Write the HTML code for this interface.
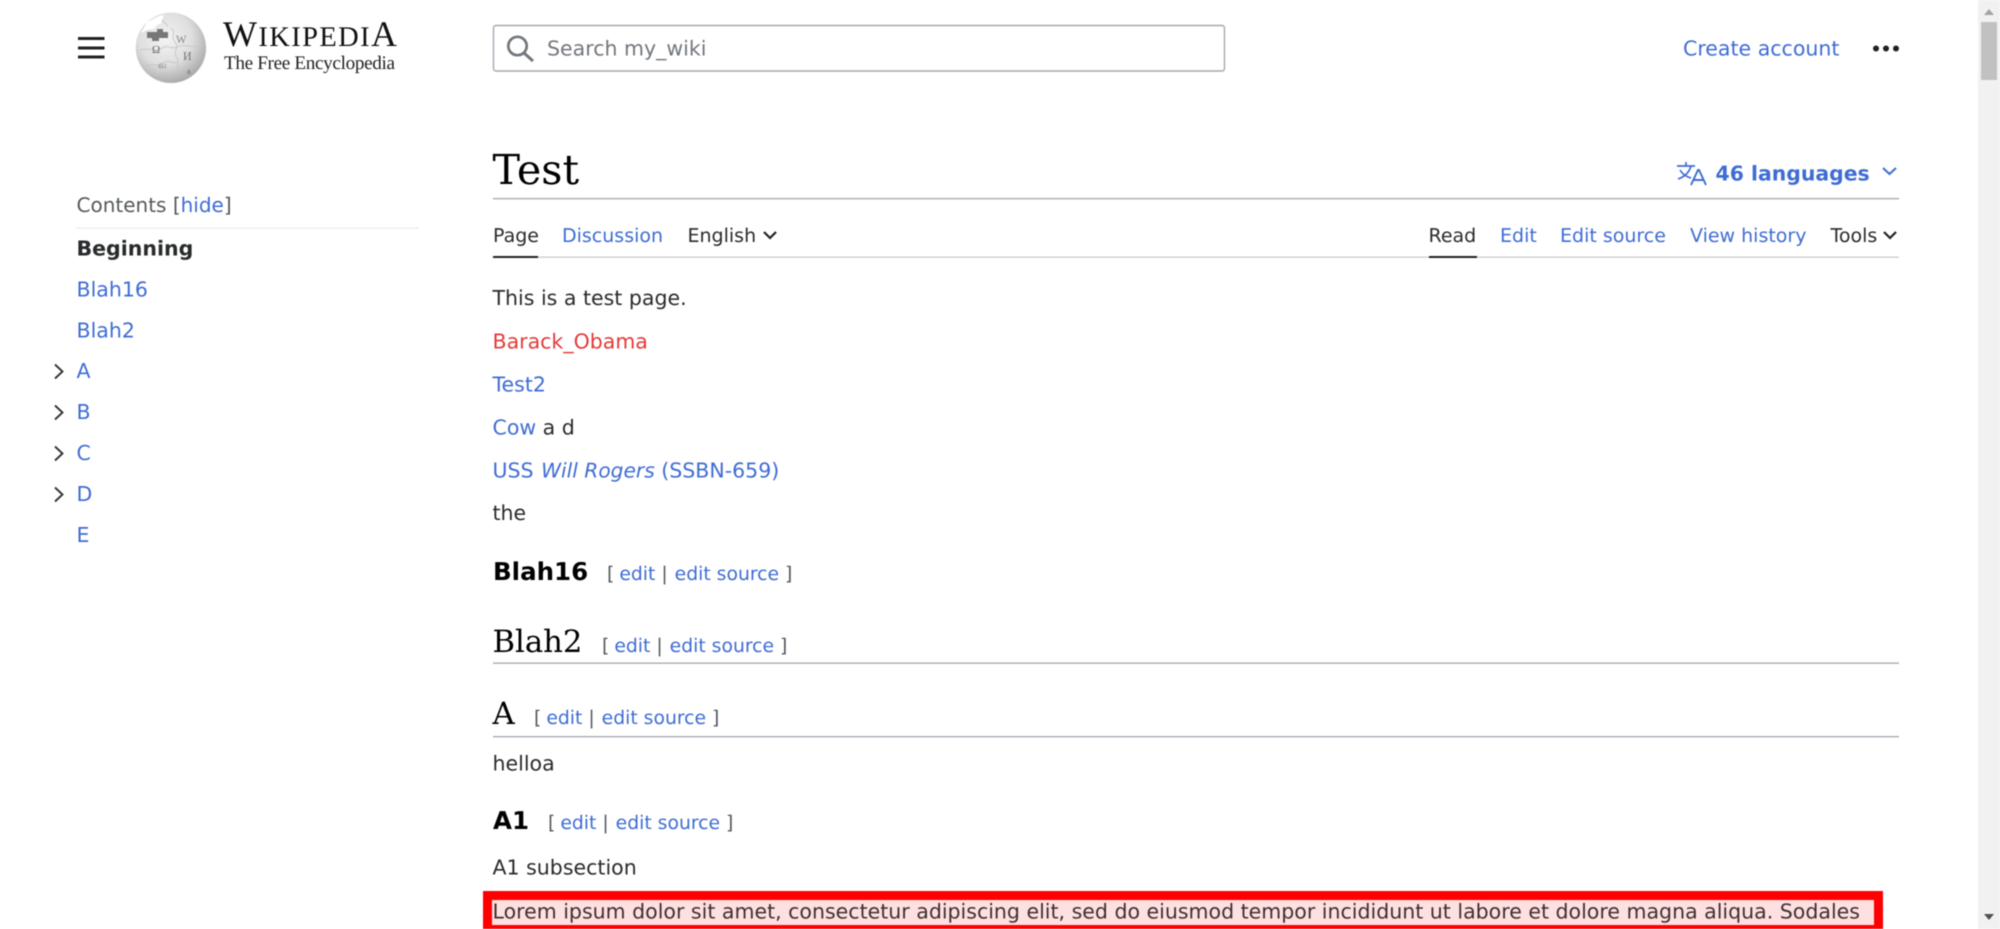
<!DOCTYPE html>
<html><head><meta charset="utf-8"><title>Test</title>
<style>
html,body{margin:0;padding:0;background:#fff;width:2000px;height:929px;overflow:hidden}
svg{display:block;position:absolute;left:0;top:0;filter:blur(.65px)}
text{font-family:"DejaVu Sans",sans-serif;font-size:20.53px;fill:#282a2c;text-rendering:geometricPrecision}
.l{fill:#3f6cd3}
.r{fill:#e33a3a}
.e{font-size:18.8px;fill:#54595d}
.e tspan{fill:#3f6cd3}
.e tspan.g{fill:#54595d}
.t{font-size:19px}
.s{font-family:"DejaVu Serif",serif;fill:#000}
.b{font-weight:bold;font-size:24.5px;fill:#000}
.m{font-family:"Liberation Serif",serif;fill:#111}
</style></head><body>
<svg width="2000" height="929" viewBox="0 0 2000 929" xmlns="http://www.w3.org/2000/svg">
<defs><radialGradient id="gl" cx=".42" cy=".36" r=".7"><stop offset="0" stop-color="#f4f4f4"/><stop offset=".55" stop-color="#dedede"/><stop offset="1" stop-color="#a0a0a0"/></radialGradient></defs>
<rect x="78" y="37" width="26.500" height="3" fill="#202122"/><rect x="78" y="46.500" width="26.500" height="3" fill="#202122"/><rect x="78" y="55.500" width="26.500" height="3" fill="#202122"/>
<circle cx="171" cy="48" r="35" fill="url(#gl)" stroke="#d0d0d0" stroke-width=".5"/>
<path d="M147 32h10v-3h6v3h5v6h-9v3h-7v-3h-5z" fill="#777"/>
<path d="M171 28c6 4-1 8 4 14 5 5-3 10 2 16 3 4-1 8 1 14M140 50c8-3 16 3 22-2 5-4 10 2 15-1 7-4 14 2 28-2M146 66c7-3 12 1 17-3 6-5 10 2 14-1M160 18l8 8" fill="none" stroke="#c6c6c6" stroke-width=".9"/>
<path d="M147 22l12-6 5-1-3 8-5 3-2 3-7 1-6 3z" fill="#fff"/>
<text x="152" y="53" class="m" style="font-size:11px;fill:#666">Ω</text>
<text x="176" y="43" class="m" style="font-size:11px;fill:#888">W</text>
<text x="183" y="60" class="m" style="font-size:12px;fill:#777">И</text>
<text x="158" y="68" class="m" style="font-size:9px;fill:#777">வ</text>
<text x="187" y="74" class="m" style="font-size:8px;fill:#777">ፅ</text>
<text x="223" y="46" class="m" style="font-size:36px" textLength="174">W<tspan style="font-size:28.500px">IKIPEDI</tspan>A</text>
<text x="224" y="69" class="m" style="font-size:19.200px;fill:#222" textLength="171">The Free Encyclopedia</text>
<rect x="493.500" y="25.500" width="731" height="45.500" rx="2.500" fill="#fff" stroke="#a2a9b1" stroke-width="1.400"/>
<circle cx="517.500" cy="46" r="9.200" fill="none" stroke="#72777d" stroke-width="2.700"/><path d="M524 53l9 8" stroke="#72777d" stroke-width="3" fill="none"/>
<text x="547" y="55.500" style="fill:#72777d">Search my_wiki</text>
<text x="1683" y="55.500" class="l">Create account</text>
<circle cx="1876" cy="48.500" r="3" fill="#202122"/><circle cx="1886" cy="48.500" r="3" fill="#202122"/><circle cx="1896" cy="48.500" r="3" fill="#202122"/>
<rect x="1978" y="0" width="22" height="929" fill="#f1f1f1"/>
<rect x="1981" y="22" width="16" height="58" fill="#c1c1c1"/>
<path d="M1984 15l5-6 5 6z" fill="#a3a3a3"/><path d="M1984 914l5 6 5-6z" fill="#505050"/>
<text x="76.500" y="212" style="fill:#54595d;font-size:20px">Contents [<tspan class="l">hide</tspan>]</text>
<rect x="76" y="227.500" width="343" height="1.300" fill="#eaecf0"/>
<text x="76.500" y="255.500" style="font-weight:bold">Beginning</text>
<text x="76.500" y="296.500" class="l">Blah16</text>
<text x="76.500" y="337.500" class="l">Blah2</text>
<text x="76.500" y="378" class="l">A</text>
<text x="76.500" y="419" class="l">B</text>
<text x="76.500" y="460" class="l">C</text>
<text x="76.500" y="501" class="l">D</text>
<text x="76.500" y="542" class="l">E</text>
<g fill="none" stroke="#333" stroke-width="1.900"><path d="M55 364.500l7.500 7-7.500 7M55 405.500l7.500 7-7.500 7M55 446.500l7.500 7-7.500 7M55 487.500l7.500 7-7.500 7"/></g>
<text x="492.500" y="184" class="s" style="font-size:41.300px">Test</text>
<rect x="493" y="198" width="1406" height="1.300" fill="#a2a9b1"/>
<path d="M1677 166h18M1686 162v4M1691 166c-2 7-7 11-13 13M1680 170c3 5 7 7 11 8" fill="none" stroke="#3f6cd3" stroke-width="1.700"/>
<path d="M1691 185l7-15h1l7 15M1694 180h10" fill="none" stroke="#3f6cd3" stroke-width="1.900"/>
<text x="1715.500" y="180.500" class="l" style="font-weight:bold;font-size:20.400px">46 languages</text>
<path d="M1883 168l6.500 6 6.500-6" fill="none" stroke="#3f6cd3" stroke-width="2"/>
<text x="493" y="242" class="t">Page</text>
<text x="562" y="242" class="t l">Discussion</text>
<text x="687.500" y="242" class="t">English</text>
<path d="M764 232l6 6 6-6" fill="none" stroke="#202122" stroke-width="2.200"/>
<text x="1428.500" y="242" class="t">Read</text>
<text x="1500" y="242" class="t l">Edit</text>
<text x="1560" y="242" class="t l">Edit source</text>
<text x="1690" y="242" class="t l">View history</text>
<text x="1830.500" y="242" class="t">Tools</text>
<path d="M1884 232l6 6 6-6" fill="none" stroke="#202122" stroke-width="2.200"/>
<rect x="493" y="256.500" width="1406" height="1.300" fill="#c8ccd1"/>
<rect x="493" y="256" width="45" height="2" fill="#202122"/>
<rect x="1429" y="256" width="48" height="2" fill="#202122"/>
<text x="492.500" y="305">This is a test page.</text>
<text x="492.500" y="348.500" class="r">Barack_Obama</text>
<text x="492.500" y="391.500" class="l">Test2</text>
<text x="492.500" y="434.500"><tspan class="l">Cow</tspan> a d</text>
<text x="492.500" y="477.500" class="l">USS <tspan dx="1" font-style="italic" style="font-size:20.200px">Will Rogers</tspan> (SSBN-659)</text>
<text x="492.500" y="520">the</text>
<text x="493" y="580" class="b">Blah16</text>
<text x="607" y="580" class="e"><tspan class="g">[ </tspan><tspan dx="-1">edit</tspan><tspan class="g"> | </tspan><tspan dx="1">edit source</tspan><tspan class="g"> ]</tspan></text>
<text x="492.500" y="652" class="s" style="font-size:30.700px">Blah2</text>
<text x="602" y="652" class="e"><tspan class="g">[ </tspan><tspan dx="-1">edit</tspan><tspan class="g"> | </tspan><tspan dx="1">edit source</tspan><tspan class="g"> ]</tspan></text>
<rect x="493" y="662.500" width="1406" height="1.300" fill="#a2a9b1"/>
<text x="492.500" y="724" class="s" style="font-size:30.700px">A</text>
<text x="534" y="724" class="e"><tspan class="g">[ </tspan><tspan dx="-1">edit</tspan><tspan class="g"> | </tspan><tspan dx="1">edit source</tspan><tspan class="g"> ]</tspan></text>
<rect x="493" y="736" width="1406" height="1.300" fill="#a2a9b1"/>
<text x="492.500" y="770.500">helloa</text>
<text x="493" y="829" class="b">A1</text>
<text x="548" y="829" class="e"><tspan class="g">[ </tspan><tspan dx="-1">edit</tspan><tspan class="g"> | </tspan><tspan dx="1">edit source</tspan><tspan class="g"> ]</tspan></text>
<text x="492.500" y="874.500">A1 subsection</text>
<rect x="483" y="891" width="1400" height="38" fill="#ff0000"/>
<rect x="492" y="900" width="1382" height="25" fill="#ffe0e0"/>
<text x="492.500" y="918.500" style="fill:#3f2f31">Lorem ipsum dolor sit amet, consectetur adipiscing elit, sed do eiusmod tempor incididunt ut labore et dolore magna aliqua. Sodales</text>
</svg>
</body></html>
